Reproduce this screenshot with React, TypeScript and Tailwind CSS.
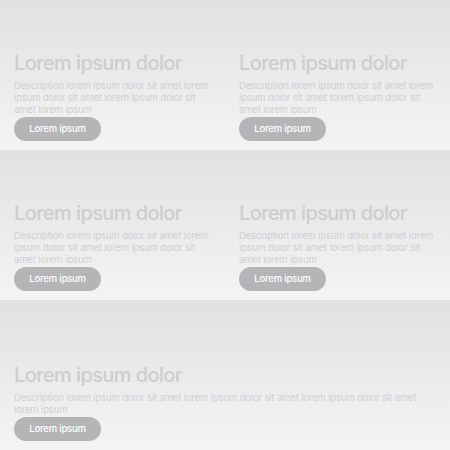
import React from "react";

const Card = ({ wide = false }: { wide?: boolean }) => (
  <div
    className={`flex h-[150px] flex-col justify-end bg-gradient-to-b from-[#e1e1e3] to-[#f4f4f4] px-[14px] pb-[9px] ${wide ? "col-span-2" : ""}`}
  >
    <h2 className="text-[20px] leading-[24px] font-medium tracking-[-0.6px] text-[#cdcdd0]">
      Lorem ipsum dolor
    </h2>
    <p className="mt-[5px] text-[9.5px] leading-[12px] tracking-[-0.15px] text-[#cfcfd2]">
      Description lorem ipsum dolor sit amet lorem ipsum dolor sit amet lorem ipsum dolor sit amet lorem ipsum
    </p>
    <div className="mt-[-2px]">
      <button className="h-[24px] w-[87px] rounded-full bg-[#b5b5b8] text-[9.5px] font-medium tracking-[-0.2px] text-white">
        Lorem ipsum
      </button>
    </div>
  </div>
);

export default function App() {
  return (
    <div
      className="grid h-[450px] w-[450px] grid-cols-2"
      style={{ fontFamily: "Inter, 'Noto Sans', sans-serif" }}
    >
      <Card />
      <Card />
      <Card />
      <Card />
      <Card wide />
    </div>
  );
}
